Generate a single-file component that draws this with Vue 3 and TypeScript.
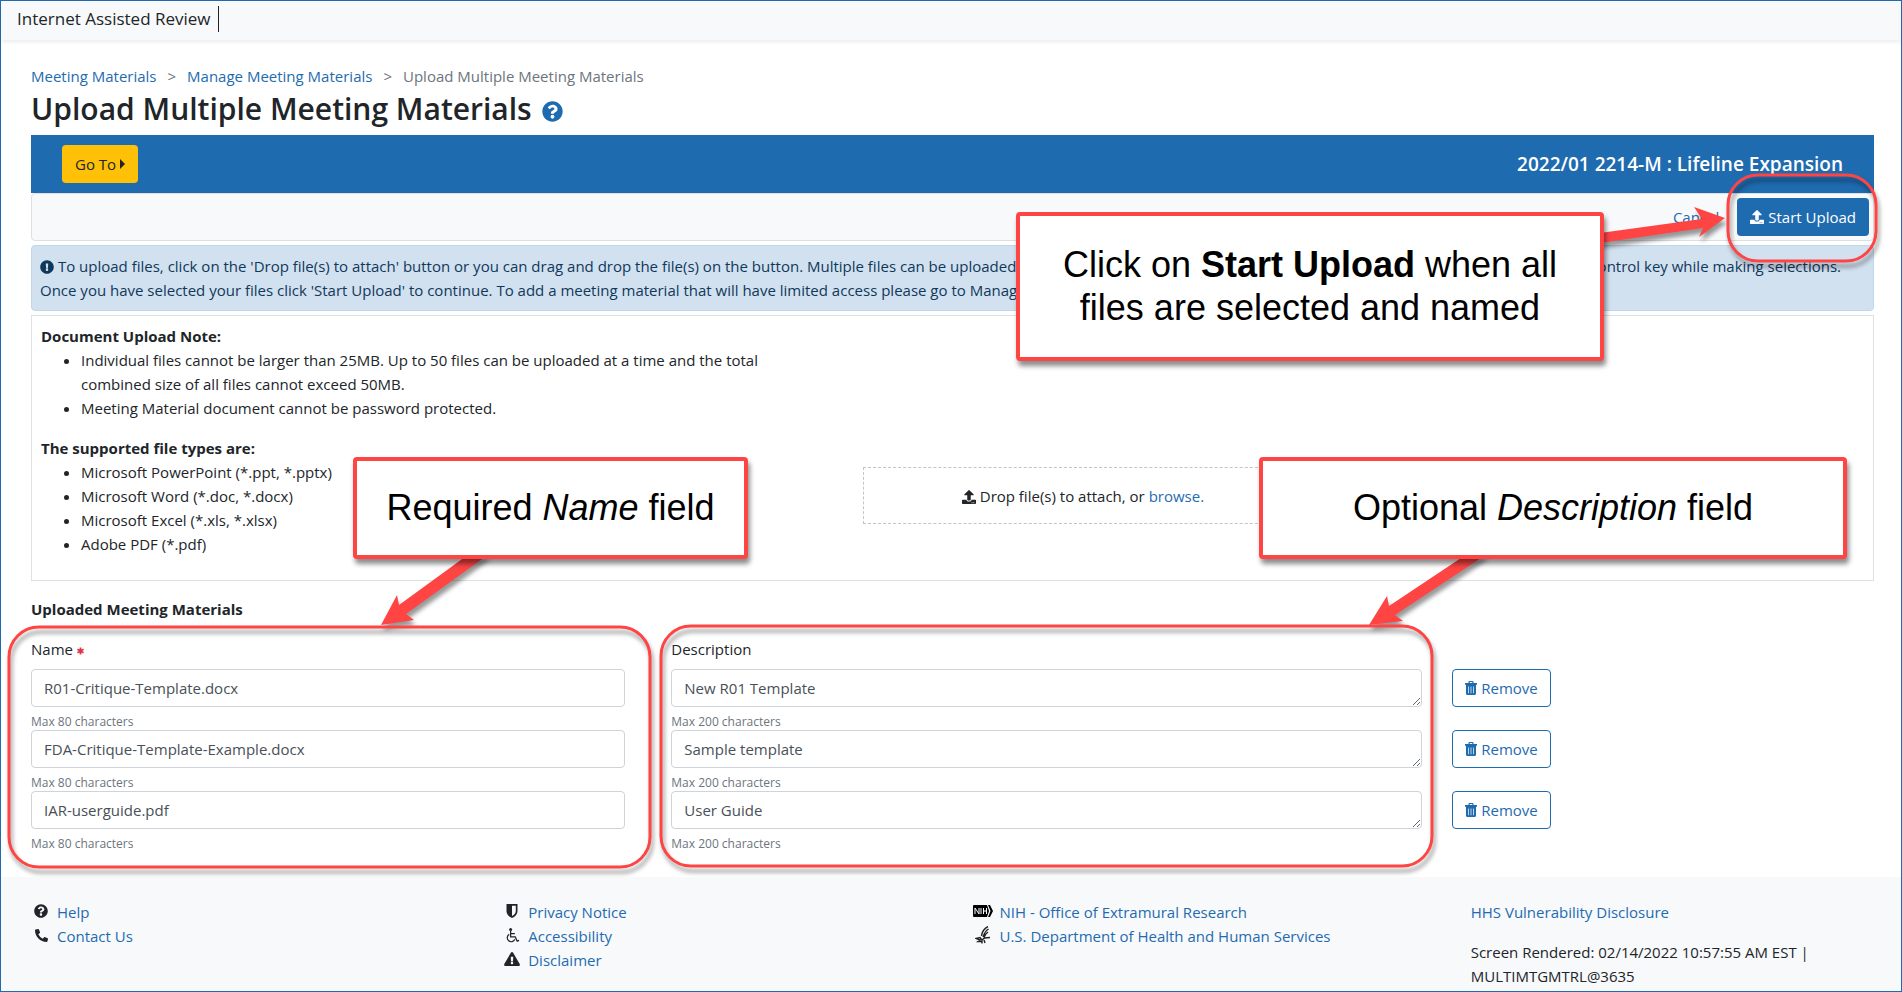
<script setup lang="ts">
import { ref } from 'vue'

interface Material {
  name: string
  description: string
}

const materials = ref<Material[]>([
  { name: 'R01-Critique-Template.docx', description: 'New R01 Template' },
  { name: 'FDA-Critique-Template-Example.docx', description: 'Sample template' },
  { name: 'IAR-userguide.pdf', description: 'User Guide' },
])

const fileTypes: string[] = [
  'Microsoft PowerPoint (*.ppt, *.pptx)',
  'Microsoft Word (*.doc, *.docx)',
  'Microsoft Excel (*.xls, *.xlsx)',
  'Adobe PDF (*.pdf)',
]

const questionPath =
  'M504 256c0 136.997-111.043 248-248 248S8 392.997 8 256C8 119.083 119.043 8 256 8s248 111.083 248 248zM262.655 90c-54.497 0-89.255 22.957-116.549 63.758-3.536 5.286-2.353 12.415 2.715 16.258l34.699 26.31c5.205 3.947 12.621 3.008 16.665-2.122 17.864-22.658 30.113-35.797 57.303-35.797 20.429 0 45.698 13.148 45.698 32.958 0 14.976-12.363 22.667-32.534 33.976C247.128 238.528 216 254.941 216 296v4c0 6.627 5.373 12 12 12h56c6.627 0 12-5.373 12-12v-1.333c0-28.462 83.186-29.647 83.186-106.667 0-58.002-60.165-102-116.531-102zM256 338c-25.365 0-46 20.635-46 46 0 25.364 20.635 46 46 46s46-20.636 46-46c0-25.365-20.635-46-46-46z'
const uploadPath =
  'M296 384h-80c-13.3 0-24-10.7-24-24V192h-87.7c-17.8 0-26.7-21.5-14.1-34.1L242.3 5.7c7.5-7.5 19.8-7.5 27.3 0l152.2 152.2c12.6 12.6 3.7 34.1-14.1 34.1H320v168c0 13.3-10.7 24-24 24zm216-8v112c0 13.3-10.7 24-24 24H24c-13.3 0-24-10.7-24-24V376c0-13.3 10.7-24 24-24h136v8c0 30.9 25.1 56 56 56h80c30.9 0 56-25.1 56-56v-8h136c13.3 0 24 10.7 24 24zm-124 88c0-11-9-20-20-20s-20 9-20 20 9 20 20 20 20-9 20-20zm64 0c0-11-9-20-20-20s-20 9-20 20 9 20 20 20 20-9 20-20z'

function removeMaterial(index: number): void {
  materials.value.splice(index, 1)
}
</script>

<template>
  <div class="page">
    <header class="topbar">
      <span class="app-name">Internet Assisted Review</span>
    </header>

    <main class="content">
      <nav class="breadcrumb" aria-label="Breadcrumb">
        <a href="#">Meeting Materials</a>
        <span class="sep">&gt;</span>
        <a href="#">Manage Meeting Materials</a>
        <span class="sep">&gt;</span>
        <span class="current">Upload Multiple Meeting Materials</span>
      </nav>

      <h1>
        Upload Multiple Meeting Materials
        <a href="#" class="help" aria-label="Help">
          <svg viewBox="0 0 512 512"><path :d="questionPath" /></svg>
        </a>
      </h1>

      <div class="banner">
        <button type="button" class="goto">
          Go To
          <svg viewBox="0 0 5 10"><path d="M0 0L5 5L0 10Z" /></svg>
        </button>
        <h2>2022/01 2214-M : Lifeline Expansion</h2>
      </div>

      <div class="toolbar">
        <a href="#">Cancel</a>
        <button type="button" class="primary">
          <svg class="icon" viewBox="0 0 512 512"><path :d="uploadPath" /></svg>
          Start Upload
        </button>
      </div>

      <div class="alert">
        <svg class="icon" viewBox="0 0 512 512">
          <path
            d="M504 256c0 136.997-111.043 248-248 248S8 392.997 8 256C8 119.083 119.043 8 256 8s248 111.083 248 248zm-248 50c-25.405 0-46 20.595-46 46s20.595 46 46 46 46-20.595 46-46-20.595-46-46-46zm-43.673-165.346l7.418 136c.347 6.364 5.609 11.346 11.982 11.346h48.546c6.373 0 11.635-4.982 11.982-11.346l7.418-136c.375-6.874-5.098-12.654-11.982-12.654h-63.383c-6.884 0-12.356 5.78-11.981 12.654z"
          />
        </svg>
        To upload files, click on the 'Drop file(s) to attach' button or you can drag and drop the file(s) on the
        button. Multiple files can be uploaded at one time by selecting several documents and holding down the shift
        key or the control key while making selections.<br />
        Once you have selected your files click 'Start Upload' to continue. To add a meeting material that will have
        limited access please go to Manage Meeting Materials.
      </div>

      <section class="notes">
        <div class="notes-text">
          <h3>Document Upload Note:</h3>
          <ul>
            <li>
              Individual files cannot be larger than 25MB. Up to 50 files can be uploaded at a time and the total
              combined size of all files cannot exceed 50MB.
            </li>
            <li>Meeting Material document cannot be password protected.</li>
          </ul>
          <h3>The supported file types are:</h3>
          <ul>
            <li v-for="type in fileTypes" :key="type">{{ type }}</li>
          </ul>
        </div>
        <div class="drop-zone">
          <span>
            <svg class="icon" viewBox="0 0 512 512"><path :d="uploadPath" /></svg>
            Drop file(s) to attach, or <a href="#">browse.</a>
          </span>
        </div>
      </section>

      <section class="uploaded">
        <h3>Uploaded Meeting Materials</h3>
        <div class="row labels">
          <label class="name-col" for="name-0">
            Name
            <svg class="required" viewBox="0 0 8 8"><path d="M4 0V8M0.5 2L7.5 6M7.5 2L0.5 6" /></svg>
          </label>
          <label class="desc-col" for="desc-0">Description</label>
        </div>
        <div v-for="(item, i) in materials" :key="i" class="row">
          <div class="name-col">
            <input :id="`name-${i}`" v-model="item.name" type="text" maxlength="80" aria-label="Name" />
            <small>Max 80 characters</small>
          </div>
          <div class="desc-col">
            <textarea :id="`desc-${i}`" v-model="item.description" rows="1" maxlength="200" aria-label="Description"></textarea>
            <small>Max 200 characters</small>
          </div>
          <button type="button" class="remove" @click="removeMaterial(i)">
            <svg class="trash" viewBox="0 0 12 14">
              <path
                fill-rule="evenodd"
                d="M3.5 2V1Q3.5 0 4.5 0H7.5Q8.5 0 8.5 1V2H12V3.8H0V2ZM4.7 2H7.3V1.1H4.7ZM1 3.8H11V12.5Q11 14 9.5 14H2.5Q1 14 1 12.5ZM3.2 5.5V12.2H3.9V5.5ZM5.65 5.5V12.2H6.35V5.5ZM8.1 5.5V12.2H8.8V5.5Z"
              />
            </svg>
            Remove
          </button>
        </div>
      </section>
    </main>

    <footer>
      <ul>
        <li>
          <span class="mark"><svg class="icon" viewBox="0 0 512 512"><path :d="questionPath" /></svg></span>
          <a href="#">Help</a>
        </li>
        <li>
          <span class="mark">
            <svg class="icon small" viewBox="0 0 512 512">
              <path
                d="M497.39 361.8l-112-48a24 24 0 0 0-28 6.9l-49.6 60.6A370.66 370.66 0 0 1 130.6 204.11l60.6-49.6a23.94 23.94 0 0 0 6.9-28l-48-112A24.16 24.16 0 0 0 122.6.61l-104 24A24 24 0 0 0 0 48c0 256.5 207.9 464 464 464a24 24 0 0 0 23.4-18.6l24-104a24.29 24.29 0 0 0-14.01-27.6z"
              />
            </svg>
          </span>
          <a href="#">Contact Us</a>
        </li>
      </ul>
      <ul>
        <li>
          <span class="mark">
            <svg class="icon" viewBox="0 0 14 14">
              <path fill-rule="evenodd" d="M1.5 0H12.5V7Q12.5 11.5 7 14Q1.5 11.5 1.5 7ZM7 1.8V12Q10.8 10 10.8 7V1.8Z" />
            </svg>
          </span>
          <a href="#">Privacy Notice</a>
        </li>
        <li>
          <span class="mark">
            <svg class="icon wheelchair" viewBox="0 0 16 16">
              <circle cx="6" cy="1.6" r="1.6" />
              <path d="M6 3V9.5H11L13 14L15 13.2M6 6H10.5M4.5 6.8A4.2 4.2 0 1 0 10.5 12" />
            </svg>
          </span>
          <a href="#">Accessibility</a>
        </li>
        <li>
          <span class="mark">
            <svg class="icon warning" viewBox="0 0 576 512">
              <path
                d="M569.517 440.013C587.975 472.007 564.806 512 527.94 512H48.054c-36.937 0-59.999-40.055-41.577-71.987L246.423 23.985c18.467-32.009 64.72-31.951 83.154 0l239.94 416.028zM288 354c-25.405 0-46 20.595-46 46s20.595 46 46 46 46-20.595 46-46-20.595-46-46-46zm-43.673-165.346l7.418 136c.347 6.364 5.609 11.346 11.982 11.346h48.546c6.373 0 11.635-4.982 11.982-11.346l7.418-136c.375-6.874-5.098-12.654-11.982-12.654h-63.383c-6.884 0-12.356 5.78-11.981 12.654z"
              />
            </svg>
          </span>
          <a href="#">Disclaimer</a>
        </li>
      </ul>
      <ul>
        <li>
          <span class="mark">
            <svg class="nih" viewBox="0 0 20 12">
              <path d="M1 0H14L16 6L14 12H1Q0 12 0 11V1Q0 0 1 0Z" />
              <path d="M15 0H17L20 6L17 12H15L17.5 6Z" />
              <path class="strokes" d="M2 9V3L6 9V3M8 3V9M10.5 3V9M10.5 6H13.5M13.5 3V9" />
            </svg>
          </span>
          <a href="#">NIH - Office of Extramural Research</a>
        </li>
        <li>
          <span class="mark">
            <svg class="eagle" viewBox="0 0 16 18">
              <path d="M13 0.5Q7.5 3 6.5 10M13.5 3Q10 5 8 11M13 6Q10.500 7.500 9 11.500M15 11.500L9.500 12L7 14L5 11.500L1 12.500L5 14L3 15.500H7L7 17.500M9 14L10 17" />
            </svg>
          </span>
          <a href="#">U.S. Department of Health and Human Services</a>
        </li>
      </ul>
      <div class="meta">
        <a href="#">HHS Vulnerability Disclosure</a>
        <p>Screen Rendered: 02/14/2022 10:57:55 AM EST |<br />MULTIMTGMTRL@3635</p>
      </div>
    </footer>

    <div class="overlay">
      <svg class="marks">
        <rect x="1728" y="175" width="148" height="86" rx="30" />
        <rect x="9" y="627" width="641" height="240" rx="30" />
        <rect x="661" y="626" width="771" height="240" rx="30" />
        <polygon points="1600,233 1702,219 1694,207 1725,218 1699,237 1703,228 1600,243" />
        <polygon points="469,554 399,605 397,595 381,625 414,620 406,614 489,554" />
        <polygon points="1467,554 1389,606 1387,596 1369,625 1403,621 1395,615 1487,554" />
      </svg>
      <div class="callout start">
        <p>Click on <strong>Start Upload</strong> when all<br />files are selected and named</p>
      </div>
      <div class="callout name"><p>Required <em>Name</em> field</p></div>
      <div class="callout description"><p>Optional <em>Description</em> field</p></div>
    </div>
  </div>
</template>

<style>
body {
  margin: 0;
}
</style>

<style scoped>
* {
  box-sizing: border-box;
}
.page {
  position: relative;
  display: flex;
  flex-direction: column;
  min-height: 100vh;
  border: 1px solid #1f6bb0;
  background: #fff;
  color: #212529;
  font-family: 'Open Sans', 'Noto Sans', sans-serif;
  font-size: 15px;
  line-height: 24px;
}
a {
  color: #1f6bb0;
  text-decoration: none;
}
button,
input,
textarea {
  font: inherit;
}
button {
  display: inline-flex;
  align-items: center;
  gap: 4px;
  height: 38px;
  border: 1px solid transparent;
  border-radius: 4px;
}
h1,
h2,
h3,
p,
ul {
  margin: 0;
}
h3 {
  font-size: 15px;
  font-weight: 700;
}
svg {
  fill: currentColor;
}
.icon {
  width: 14px;
  height: 14px;
}
.topbar {
  display: flex;
  height: 39px;
  padding: 5px 16px;
  background: #f8f9fb;
  box-shadow: 0 2px 4px rgba(0, 0, 0, 0.08);
}
.app-name {
  height: 26px;
  padding-right: 8px;
  border-right: 1px solid #212529;
  font-size: 17px;
  font-weight: 500;
  line-height: 26px;
}
.content {
  padding: 24px 27px 25px 30px;
}
.breadcrumb {
  display: flex;
  gap: 11px;
}
.sep,
.current {
  color: #6c757d;
}
h1 {
  display: flex;
  align-items: center;
  gap: 10px;
  height: 47px;
  padding-bottom: 6px;
  font-size: 30px;
  font-weight: 600;
  line-height: 40px;
}
.help {
  display: flex;
  padding-top: 6px;
}
.help svg {
  width: 21px;
  height: 21px;
}
.banner {
  display: flex;
  align-items: center;
  justify-content: space-between;
  height: 58px;
  padding: 0 31px;
  background: #1f6bb0;
  color: #fff;
}
.goto {
  padding: 0 12px;
  background: #ffc107;
  color: #212529;
}
.goto svg {
  width: 5px;
  height: 10px;
}
h2 {
  font-size: 19px;
  font-weight: 600;
}
.toolbar {
  display: flex;
  align-items: center;
  justify-content: flex-end;
  gap: 18px;
  height: 48px;
  padding: 0 4px;
  border: 1px solid #dcdfe3;
  border-radius: 4px;
  background: #f8f9fb;
}
.primary {
  padding: 0 12px;
  background: #1f6bb0;
  color: #fff;
}
.alert {
  margin-top: 4px;
  padding: 8px;
  border: 1px solid #c0d6e9;
  border-radius: 4px;
  background: #d2e1ef;
  color: #10385b;
}
.alert .icon,
.drop-zone .icon {
  vertical-align: -2px;
}
.notes {
  display: flex;
  justify-content: space-between;
  margin-top: 4px;
  padding: 8px 8px 24px 9px;
  border: 1px solid #dee2e6;
}
.notes-text {
  width: 42%;
}
.notes ul {
  padding-left: 40px;
}
.notes-text ul:first-of-type {
  max-width: 750px;
  margin-bottom: 16px;
}
.drop-zone {
  display: flex;
  align-items: center;
  justify-content: center;
  align-self: flex-end;
  width: 440px;
  height: 57px;
  margin-right: 562px;
  margin-bottom: 32px;
  border: 1px dashed #c2c5c8;
}
.uploaded {
  padding-top: 16px;
}
.row {
  display: flex;
}
.row.labels {
  padding: 16px 0 8px;
}
.name-col {
  flex: 0 0 calc(33.333% - 20px);
  margin-right: 46px;
}
.desc-col {
  flex: 0 0 calc(41.667% - 17px);
  margin-right: 30px;
}
.required {
  width: 7px;
  height: 8px;
  fill: none;
  stroke: #dc3545;
  stroke-width: 2;
}
input,
textarea {
  display: block;
  width: 100%;
  height: 38px;
  padding: 6px 12px;
  border: 1px solid #ced4da;
  border-radius: 4px;
  background: #fff;
  color: #495057;
}
textarea {
  resize: vertical;
  overflow: hidden;
}
small {
  display: block;
  height: 23px;
  padding-top: 5px;
  color: #6c757d;
  font-size: 12px;
  line-height: 20px;
}
.remove {
  padding: 0 12px;
  border-color: #1f6bb0;
  background: #fff;
  color: #1f6bb0;
}
.trash {
  width: 12px;
  height: 14px;
}
footer {
  display: grid;
  flex: 1;
  grid-template-columns: repeat(3, 25.2%) 1fr;
  padding: 23px 0 0 30px;
  background: #f8f9fb;
}
footer ul {
  padding: 0;
  list-style: none;
}
footer li {
  display: flex;
}
.mark {
  display: flex;
  align-items: center;
  justify-content: center;
  width: 20px;
  height: 22px;
  margin-right: 6px;
}
.icon.small {
  width: 13px;
  height: 13px;
}
.icon.wheelchair {
  width: 15px;
  height: 15px;
}
.wheelchair path {
  fill: none;
  stroke: currentColor;
  stroke-width: 1.3;
}
.icon.warning {
  width: 16px;
}
.nih {
  width: 20px;
  height: 12px;
  fill: #000;
}
.nih .strokes {
  fill: none;
  stroke: #fff;
  stroke-width: 1;
}
.eagle {
  width: 16px;
  height: 18px;
  fill: none;
  stroke: #222;
  stroke-width: 1.4;
}
.meta {
  padding-left: 26px;
}
.meta p {
  margin-top: 16px;
}
.overlay {
  position: absolute;
  inset: -1px;
  overflow: hidden;
  pointer-events: none;
}
.marks {
  width: 100%;
  height: 100%;
  filter: drop-shadow(2px 5px 2px rgba(0, 0, 0, 0.4));
}
.marks rect {
  fill: none;
  stroke: #ff4444;
  stroke-width: 3;
}
.marks polygon {
  fill: #ff4444;
}
.callout {
  position: absolute;
  display: flex;
  align-items: center;
  justify-content: center;
  padding-bottom: 2px;
  border: 4px solid #ff4444;
  border-radius: 4px;
  background: #fff;
  box-shadow: 2px 5px 5px rgba(0, 0, 0, 0.45);
  color: #000;
  font-family: 'Liberation Sans', Arial, sans-serif;
  font-size: 36px;
  line-height: 43px;
  text-align: center;
}
.callout.start {
  top: 212px;
  left: 1016px;
  width: 588px;
  height: 149px;
}
.callout.name {
  top: 457px;
  left: 353px;
  width: 395px;
  height: 102px;
}
.callout.description {
  top: 457px;
  left: 1259px;
  width: 588px;
  height: 102px;
}
</style>
